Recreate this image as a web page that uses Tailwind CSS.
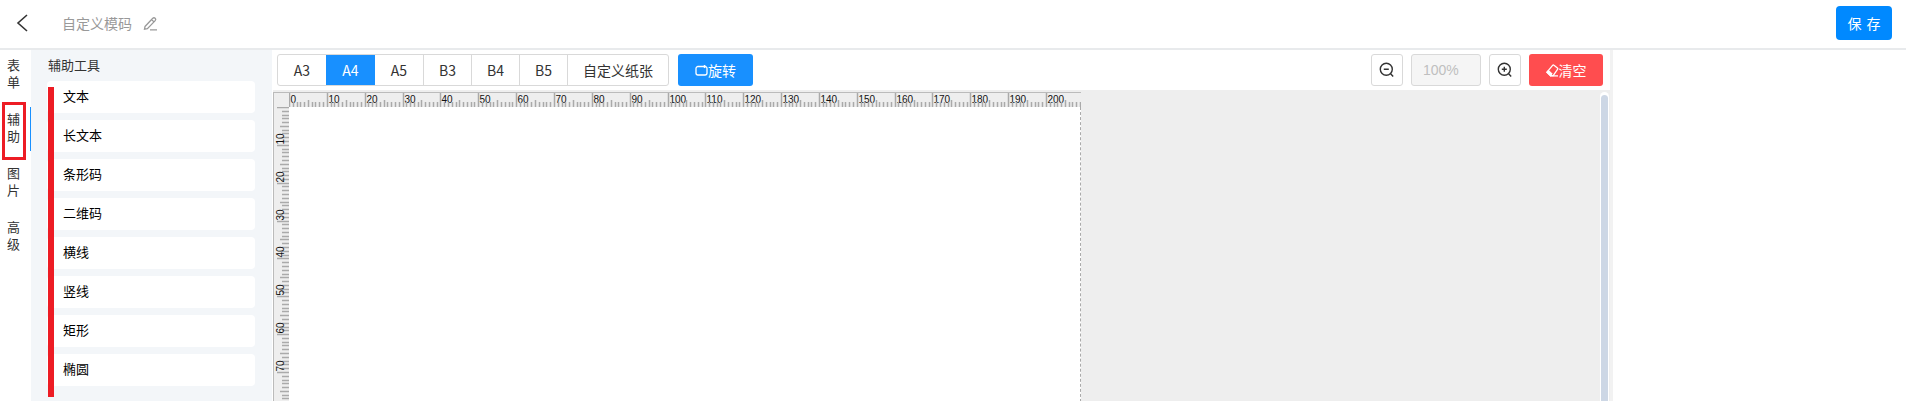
<!DOCTYPE html>
<html lang="zh-CN">
<head>
  <meta charset="UTF-8" />
  <title>自定义模码</title>
  <script src="https://cdn.jsdelivr.net/npm/@tailwindcss/browser@4"></script>
</head>
<body class="h-[401px] overflow-hidden bg-white text-[13px] text-[#333] font-['Noto_Sans_CJK_SC',sans-serif]">

  <!-- header -->
  <header class="h-[50px] pb-[2px] border-b-2 border-[#e8eaec] flex items-center">
    <svg class="ml-[16px] w-[12px] h-[18px]" viewBox="0 0 12 18" fill="none" stroke="#333" stroke-width="1.6"><path d="M11 1 2 9l9 8"/></svg>
    <span class="ml-[34px] text-[14px] text-[#999]">自定义模码</span>
    <svg class="ml-[11px] w-[15px] h-[15px]" viewBox="0 0 15 15" fill="none" stroke="#999" stroke-width="1.3"><path d="M2 10.5 9.8 2.3a1.6 1.6 0 0 1 2.4 2.3L4.4 12.6l-2.9.6zM8.6 3.6l2.5 2.4M7 13.8h7"/></svg>
    <button class="ml-auto mr-[14px] w-[56px] h-[34px] rounded bg-[#0089ff] text-white text-[14px] [word-spacing:2px]">保 存</button>
  </header>

  <div class="flex h-[351px]">
    <!-- tab rail -->
    <nav class="w-[31px] pt-[1px] flex flex-col gap-[10px] pl-[7px] leading-[17px] text-[13px]">
      <div class="h-[44px] w-[14px] flex items-center">表单</div>
      <div class="relative h-[44px] w-[14px] flex items-center">
        辅助
        <span class="absolute left-[23px] top-[2px] w-[2px] h-[44px] bg-[#1890ff]"></span>
        <span class="absolute -left-[5px] -top-[3px] w-[24px] h-[58px] border-[3px] border-[#ed1c24]"></span>
      </div>
      <div class="h-[44px] w-[14px] flex items-center">图片</div>
      <div class="h-[44px] w-[14px] flex items-center">高级</div>
    </nav>

    <!-- tool panel -->
    <aside class="relative w-[241px] bg-[#f3f6f9] pl-[16px]">
      <div class="h-[31px] pl-[1px] pb-[2px] flex items-center text-[#333]">辅助工具</div>
      <div class="w-[208px] flex flex-col gap-[7px] text-black">
        <div class="h-[32px] rounded bg-white pl-[16px] pb-[2px] flex items-center">文本</div>
        <div class="h-[32px] rounded bg-white pl-[16px] pb-[2px] flex items-center">长文本</div>
        <div class="h-[32px] rounded bg-white pl-[16px] pb-[2px] flex items-center">条形码</div>
        <div class="h-[32px] rounded bg-white pl-[16px] pb-[2px] flex items-center">二维码</div>
        <div class="h-[32px] rounded bg-white pl-[16px] pb-[2px] flex items-center">横线</div>
        <div class="h-[32px] rounded bg-white pl-[16px] pb-[2px] flex items-center">竖线</div>
        <div class="h-[32px] rounded bg-white pl-[16px] pb-[2px] flex items-center">矩形</div>
        <div class="h-[32px] rounded bg-white pl-[16px] pb-[2px] flex items-center">椭圆</div>
      </div>
      <span class="absolute left-[17px] top-[37px] w-[6px] h-[310px] bg-[#ed1c24]"></span>
    </aside>

    <!-- designer -->
    <main class="w-[1341px] border-r-[3px] border-[#f2f2f2] flex flex-col">
      <div class="h-[40px] flex items-center pl-[5px] pr-[7px] shrink-0">
        <div class="flex h-[32px] border border-[#d9d9d9] rounded-[3px] text-[14px] text-[#333] overflow-hidden">
          <button class="w-[48px]">A3</button>
          <button class="w-[49px] bg-[#1890ff] text-white">A4</button>
          <button class="w-[49px] border-r border-[#d9d9d9]">A5</button>
          <button class="w-[48px] border-r border-[#d9d9d9]">B3</button>
          <button class="w-[48px] border-r border-[#d9d9d9]">B4</button>
          <button class="w-[48px] border-r border-[#d9d9d9]">B5</button>
          <button class="w-[100px]">自定义纸张</button>
        </div>
        <button class="ml-[9px] w-[75px] h-[32px] rounded-[3px] bg-[#1890ff] text-white text-[14px] flex items-center justify-center">
          <svg class="w-[13px] h-[11px]" viewBox="0 0 13 11" fill="none" stroke="#fff" stroke-width="1.3"><path d="M10 1.5H3a2 2 0 0 0-2 2V8a2 2 0 0 0 2 2h7a2 2 0 0 0 2-2V3.5a2 2 0 0 0-2-2z"/><path d="M9 .2 10.4 1.5 9 2.8"/></svg>
          旋转
        </button>
        <button class="ml-auto w-[32px] h-[32px] border border-[#d9d9d9] rounded-[3px] flex items-center justify-center">
          <svg class="w-[16px] h-[16px]" viewBox="0 0 16 16" fill="none" stroke="#333" stroke-width="1.4"><circle cx="7.3" cy="7.3" r="6"/><path d="M4.8 7.3h5M11.6 11.8l2.6 2.8"/></svg>
        </button>
        <div class="ml-[8px] w-[70px] h-[32px] border border-[#d9d9d9] rounded-[3px] bg-[#f5f5f5] pl-[11px] flex items-center text-[14px] text-[#bfbfbf] font-['Liberation_Sans',sans-serif]">100%</div>
        <button class="ml-[8px] w-[32px] h-[32px] border border-[#d9d9d9] rounded-[3px] flex items-center justify-center">
          <svg class="w-[16px] h-[16px]" viewBox="0 0 16 16" fill="none" stroke="#333" stroke-width="1.4"><circle cx="7.3" cy="7.3" r="6"/><path d="M4.8 7.3h5M7.3 4.8v5M11.6 11.8l2.6 2.8"/></svg>
        </button>
        <button class="ml-[8px] w-[74px] h-[32px] rounded-[3px] bg-[#ff4d4f] text-white text-[14px] flex items-center justify-center">
          <svg class="w-[13px] h-[13px]" viewBox="0 0 13 13" fill="none" stroke="#fff" stroke-width="1.3"><path d="M1 8.2 6.6 1.4a1 1 0 0 1 1.4-.1l3.4 2.6a1 1 0 0 1 .1 1.4L7.2 11.6H4.4z"/><path d="M1 8.2l3.4 3.4 1.4-1.7-3.4-3.2z" fill="#fff"/><path d="M4 11.9h8"/></svg>
          清空
        </button>
      </div>

      <!-- canvas -->
      <div class="relative flex-1 ml-px bg-[#eee] overflow-hidden pt-[2px]">
        <div class="grid grid-cols-[16px_792px] grid-rows-[15px_300px] w-[808px]">
          <div class="bg-[#eee] border-l border-t border-[#bbb]"></div>
          <svg id="rulerX" width="792" height="15" class="bg-[#eee] border-t border-[#bbb] font-['Liberation_Sans',sans-serif]"></svg>
          <svg id="rulerY" width="16" height="300" class="bg-[#eee] border-l border-[#bbb] font-['Liberation_Sans',sans-serif]"></svg>
          <div class="bg-white border-r border-dashed border-[#aaa]"></div>
        </div>
        <div class="absolute right-[1px] top-[2px] w-[9px] h-[400px] bg-white rounded-[5px] px-[1px] py-[3px]">
          <div class="w-[7px] h-full rounded bg-[#cdd7e5]"></div>
        </div>
      </div>
    </main>

    <div class="flex-1"></div>
  </div>

  <script>
    const mm = 3.785;
    let x = "", y = "";
    for (let i = 0; i <= 209; i++) {
      const p = Math.round(i * mm) + 0.5;
      const major = i % 10 === 0, mid = i % 5 === 0;
      const len = major ? 15 : mid ? 8 : 6;
      x += `<line x1="${p}" x2="${p}" y1="${15 - len}" y2="15" stroke="#aaa" stroke-width="1.5"/>`;
      if (major && i <= 200) x += `<text x="${p + 1}" y="10" font-size="10" fill="#111">${i}</text>`;
    }
    for (let i = 0; i <= 79; i++) {
      const p = Math.round(i * mm) + 0.5;
      const major = i % 10 === 0, mid = i % 5 === 0;
      const len = major ? 12 : mid ? 9 : 7;
      y += `<line y1="${p}" y2="${p}" x1="${15 - len}" x2="15" stroke="#aaa" stroke-width="1.5"/>`;
      if (major && i > 0) y += `<text transform="translate(10 ${p - 1}) rotate(-90)" font-size="10" fill="#111">${i}</text>`;
    }
    document.getElementById("rulerX").innerHTML = x;
    document.getElementById("rulerY").innerHTML = y;
  </script>
</body>
</html>
